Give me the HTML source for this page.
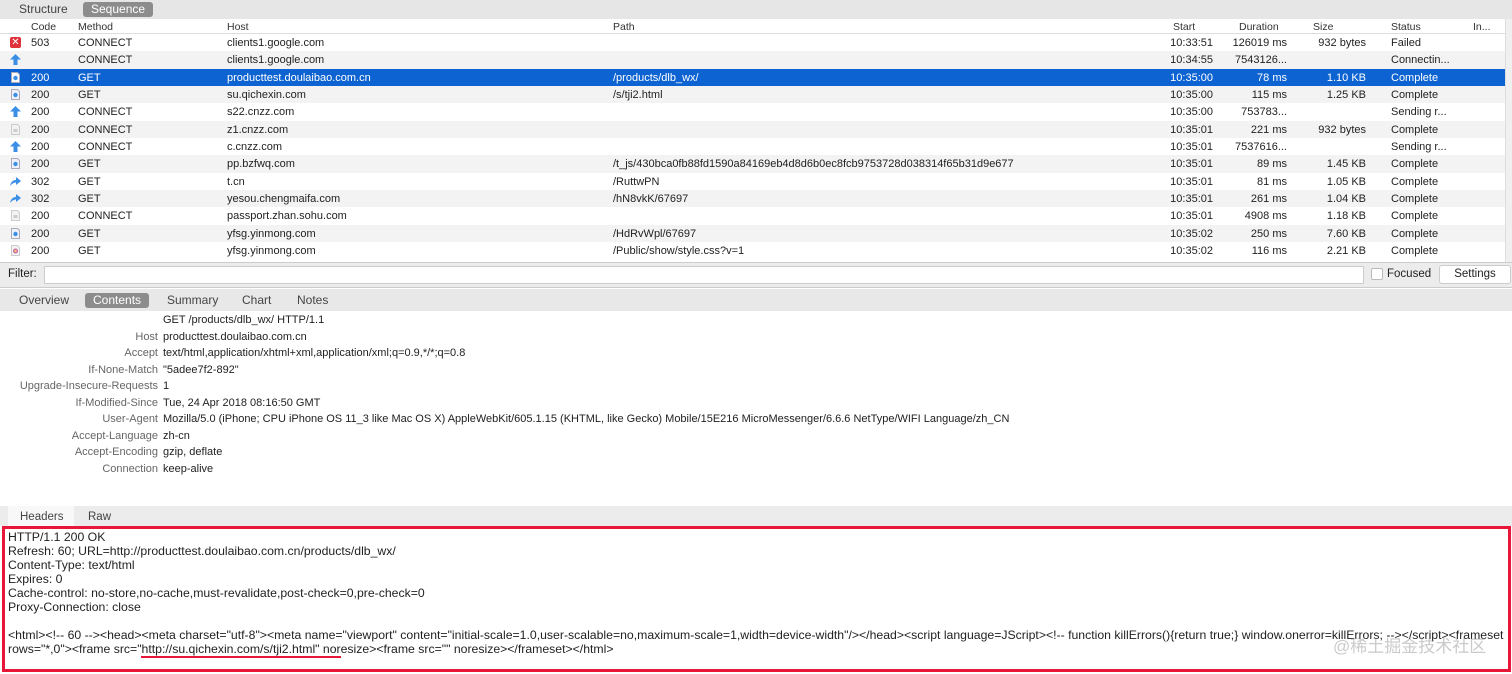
<!DOCTYPE html>
<html><head><meta charset="utf-8"><style>
*{margin:0;padding:0;box-sizing:border-box}
body{width:1512px;height:674px;overflow:hidden;background:#fff;font-family:"Liberation Sans",sans-serif;font-size:11px;color:#222;position:relative}
.abs{position:absolute}
.tabbar{left:0;top:0;width:1512px;height:19px;background:#e6e6e6}
.tab{position:absolute;top:2px;height:15px;line-height:15px;font-size:12px;color:#444;padding:0 8px;border-radius:3px}
.tab.sel{background:#8c8c8c;color:#fff}
.hdr{left:0;top:19px;width:1505px;height:15px;background:#fff;border-bottom:1px solid #ddd;color:#333;font-size:10.5px}
.hdr span{position:absolute;top:2px}
.row{position:absolute;left:0;width:1505px;height:17.33px}
.row span{position:absolute;top:3px;white-space:nowrap}
.row.alt{background:#f3f3f3}
.row.sel{background:#0d63d1;color:#fff}
.r{text-align:right}
.ic{position:absolute;left:10px;top:3px;width:11px;height:11px}
.lbl{position:absolute;right:1354px;color:#666;white-space:nowrap}
.val{position:absolute;left:163px;white-space:nowrap}
.bx{position:absolute;left:8px;white-space:nowrap;font-size:12.25px}
</style></head><body>
<div class="abs tabbar">
<div class="tab" style="left:11px">Structure</div>
<div class="tab sel" style="left:83px">Sequence</div>
</div>
<div class="abs hdr">
<span style="left:31px">Code</span><span style="left:78px">Method</span><span style="left:227px">Host</span><span style="left:613px">Path</span><span style="left:1173px">Start</span><span style="left:1239px">Duration</span><span style="left:1313px">Size</span><span style="left:1391px">Status</span><span style="left:1473px">In...</span>
</div>
<div class="abs" style="left:1505px;top:19px;width:7px;height:243px;background:#f0f0f0;border-left:1px solid #ddd"></div>
<div id="rows"></div>
<script>
var R=[
["x","503","CONNECT","clients1.google.com","","10:33:51","126019 ms","932 bytes","Failed"],
["u","","CONNECT","clients1.google.com","","10:34:55","7543126...","","Connectin..."],
["d","200","GET","producttest.doulaibao.com.cn","/products/dlb_wx/","10:35:00","78 ms","1.10 KB","Complete"],
["d","200","GET","su.qichexin.com","/s/tji2.html","10:35:00","115 ms","1.25 KB","Complete"],
["u","200","CONNECT","s22.cnzz.com","","10:35:00","753783...","","Sending r..."],
["l","200","CONNECT","z1.cnzz.com","","10:35:01","221 ms","932 bytes","Complete"],
["u","200","CONNECT","c.cnzz.com","","10:35:01","7537616...","","Sending r..."],
["d","200","GET","pp.bzfwq.com","/t_js/430bca0fb88fd1590a84169eb4d8d6b0ec8fcb9753728d038314f65b31d9e677","10:35:01","89 ms","1.45 KB","Complete"],
["r","302","GET","t.cn","/RuttwPN","10:35:01","81 ms","1.05 KB","Complete"],
["r","302","GET","yesou.chengmaifa.com","/hN8vkK/67697","10:35:01","261 ms","1.04 KB","Complete"],
["l","200","CONNECT","passport.zhan.sohu.com","","10:35:01","4908 ms","1.18 KB","Complete"],
["d","200","GET","yfsg.yinmong.com","/HdRvWpl/67697","10:35:02","250 ms","7.60 KB","Complete"],
["c","200","GET","yfsg.yinmong.com","/Public/show/style.css?v=1","10:35:02","116 ms","2.21 KB","Complete"]];
var ic={x:'<div class="ic" style="background:#e0313b;border-radius:2px;color:#fff;font-size:10px;line-height:11px;text-align:center">✕</div>',
u:'<svg class="ic" viewBox="0 0 11 11"><path d="M5.5 0L11 5.5H7.5V11H3.5V5.5H0Z" fill="#3a8ee6"/></svg>',
d:'<svg class="ic" viewBox="0 0 11 11"><path d="M1.5 0.5H7.5L9.5 2.5V10.5H1.5Z" fill="#eef2f8" stroke="#aab"/><circle cx="5.5" cy="6" r="2.2" fill="#3a8ee6"/></svg>',
l:'<svg class="ic" viewBox="0 0 11 11"><path d="M1.5 0.5H7.5L9.5 2.5V10.5H1.5Z" fill="#f2f2f2" stroke="#ccc"/><rect x="3.5" y="5" width="4" height="3" fill="#ccc"/></svg>',
r:'<svg class="ic" viewBox="0 0 11 11"><path d="M0 10C1 5 4 4 6 4V1L11 5L6 9V6.5C4 6.5 2 7.5 0 10Z" fill="#3a8ee6"/></svg>',
c:'<svg class="ic" viewBox="0 0 11 11"><path d="M1.5 0.5H7.5L9.5 2.5V10.5H1.5Z" fill="#f2f2f2" stroke="#ccc"/><circle cx="5.5" cy="6" r="2.5" fill="#c6a"/><circle cx="5.5" cy="6" r="1.2" fill="#fc6"/></svg>'};
var h='';
R.forEach(function(r,i){
var cls=i==2?'sel':(i%2?'alt':'');
var top=34+i*17.33;
var icon=ic[r[0]];
if(i==2)icon=icon.replace('#eef2f8','#fff');
h+='<div class="row '+cls+'" style="top:'+top+'px">'+icon+
'<span style="left:31px">'+r[1]+'</span><span style="left:78px">'+r[2]+'</span><span style="left:227px">'+r[3]+'</span><span style="left:613px">'+r[4]+'</span>'+
'<span class="r" style="right:292px">'+r[5]+'</span><span class="r" style="right:218px">'+r[6]+'</span><span class="r" style="right:139px">'+r[7]+'</span><span style="left:1391px">'+r[8]+'</span></div>';
});
document.getElementById('rows').innerHTML=h;
</script>
<div class="abs" style="left:0;top:262px;width:1512px;height:26px;background:#ececec;border-top:1px solid #ccc;border-bottom:1px solid #ccc"></div>
<div class="abs" style="left:8px;top:268px;font-size:11.5px">Filter:</div>
<div class="abs" style="left:44px;top:266px;width:1320px;height:18px;background:#fff;border:1px solid #ccc"></div>
<div class="abs" style="left:1371px;top:268px;width:12px;height:12px;background:#fff;border:1px solid #bbb;border-radius:2px"></div>
<div class="abs" style="left:1387px;top:268px;font-size:11.5px">Focused</div>
<div class="abs" style="left:1439px;top:265px;width:72px;height:19px;background:#fff;border:1px solid #ccc;border-radius:3px;text-align:center;line-height:17px;font-size:11.5px">Settings</div>
<div class="abs" style="left:0;top:289px;width:1512px;height:22px;background:#e8e8e8"></div>
<div class="tab abs" style="left:11px;top:293px">Overview</div>
<div class="tab abs sel" style="left:85px;top:293px">Contents</div>
<div class="tab abs" style="left:159px;top:293px">Summary</div>
<div class="tab abs" style="left:234px;top:293px">Chart</div>
<div class="tab abs" style="left:289px;top:293px">Notes</div>
<div class="val" style="top:314px">GET /products/dlb_wx/ HTTP/1.1</div>
<div class="lbl" style="top:331px">Host</div><div class="val" style="top:331px">producttest.doulaibao.com.cn</div>
<div class="lbl" style="top:347px">Accept</div><div class="val" style="top:347px">text/html,application/xhtml+xml,application/xml;q=0.9,*/*;q=0.8</div>
<div class="lbl" style="top:364px">If-None-Match</div><div class="val" style="top:364px">"5adee7f2-892"</div>
<div class="lbl" style="top:380px">Upgrade-Insecure-Requests</div><div class="val" style="top:380px">1</div>
<div class="lbl" style="top:397px">If-Modified-Since</div><div class="val" style="top:397px">Tue, 24 Apr 2018 08:16:50 GMT</div>
<div class="lbl" style="top:413px">User-Agent</div><div class="val" style="top:413px">Mozilla/5.0 (iPhone; CPU iPhone OS 11_3 like Mac OS X) AppleWebKit/605.1.15 (KHTML, like Gecko) Mobile/15E216 MicroMessenger/6.6.6 NetType/WIFI Language/zh_CN</div>
<div class="lbl" style="top:430px">Accept-Language</div><div class="val" style="top:430px">zh-cn</div>
<div class="lbl" style="top:446px">Accept-Encoding</div><div class="val" style="top:446px">gzip, deflate</div>
<div class="lbl" style="top:463px">Connection</div><div class="val" style="top:463px">keep-alive</div>
<div class="abs" style="left:0;top:506px;width:1512px;height:20px;background:#ececec"></div>
<div class="abs" style="left:8px;top:506px;width:66px;height:20px;background:#f8f8f8"></div>
<div class="abs" style="left:20px;top:511px;font-size:11.5px;color:#444">Headers</div>
<div class="abs" style="left:88px;top:511px;font-size:11.5px;color:#444">Raw</div>
<div class="abs" style="left:2px;top:526px;width:1509px;height:146px;border:3px solid #e8173a;background:#fff"></div>
<div class="bx" style="top:530px">HTTP/1.1 200 OK</div>
<div class="bx" style="top:544px">Refresh: 60; URL=http://producttest.doulaibao.com.cn/products/dlb_wx/</div>
<div class="bx" style="top:558px">Content-Type: text/html</div>
<div class="bx" style="top:572px">Expires: 0</div>
<div class="bx" style="top:586px">Cache-control: no-store,no-cache,must-revalidate,post-check=0,pre-check=0</div>
<div class="bx" style="top:600px">Proxy-Connection: close</div>
<div class="bx" style="top:628px">&lt;html&gt;&lt;!-- 60 --&gt;&lt;head&gt;&lt;meta charset="utf-8"&gt;&lt;meta name="viewport" content="initial-scale=1.0,user-scalable=no,maximum-scale=1,width=device-width"/&gt;&lt;/head&gt;&lt;script language=JScript&gt;&lt;!-- function killErrors(){return true;} window.onerror=killErrors; --&gt;&lt;/script&gt;&lt;frameset</div>
<div class="bx" style="top:642px">rows="*,0"&gt;&lt;frame src="http://su.qichexin.com/s/tji2.html" noresize&gt;&lt;frame src="" noresize&gt;&lt;/frameset&gt;&lt;/html&gt;</div>
<div class="abs" style="left:141px;top:656px;width:200px;height:2px;background:#e8173a"></div>
<div class="abs" style="left:1333px;top:632px;font-size:17px;color:rgba(150,150,150,.5);font-family:'Liberation Sans','Noto Sans CJK SC',sans-serif">@稀土掘金技术社区</div>
</body></html>
